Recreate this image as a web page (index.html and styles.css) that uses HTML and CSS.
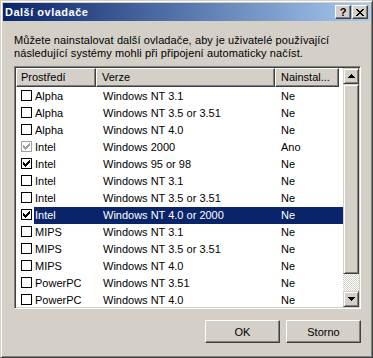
FILE: index.html
```html
<!DOCTYPE html>
<html lang="cs">
<head>
    <meta charset="UTF-8">
    <meta name="viewport" content="width=device-width, initial-scale=1.0">
    <title>Další ovladače</title>
    <link rel="stylesheet" href="styles.css">
</head>
<body>
    <div class="window">
        <div class="titlebar">
            <span class="title">Další ovladače</span>
            <div class="caption-buttons">
                <button class="cap-btn help">?</button>
                <button class="cap-btn close">
                    <svg width="8" height="7" viewBox="0 0 8 7" shape-rendering="crispEdges">
                        <path d="M0 0h2v1h-2zM6 0h2v1h-2zM1 1h2v1h-2zM5 1h2v1h-2zM2 2h4v1h-4zM3 3h2v1h-2zM2 4h4v1h-4zM1 5h2v1h-2zM5 5h2v1h-2zM0 6h2v1h-2zM6 6h2v1h-2z" fill="#000"/>
                    </svg>
                </button>
            </div>
        </div>

        <div class="content">
            <p class="intro">Můžete nainstalovat další ovladače, aby je uživatelé používající<br>následující systémy mohli při připojení automaticky načíst.</p>

            <div class="listview">
                <div class="list-main">
                    <div class="list-header">
                        <div class="head col-env">Prostředí</div>
                        <div class="head col-ver">Verze</div>
                        <div class="head col-inst">Nainstal...</div>
                    </div>
                    <div class="rows" id="rows"></div>
                </div>
                <div class="scrollbar">
                    <div class="scroll-btn">
                        <svg width="7" height="4" viewBox="0 0 7 4" shape-rendering="crispEdges"><path d="M3 0h1v1h1v1h1v1h1v1h-7v-1h1v-1h1v-1h1z" fill="#000"/></svg>
                    </div>
                    <div class="scroll-thumb"></div>
                    <div class="scroll-track"></div>
                    <div class="scroll-btn">
                        <svg width="7" height="4" viewBox="0 0 7 4" shape-rendering="crispEdges"><path d="M0 0h7v1h-1v1h-1v1h-1v1h-1v-1h-1v-1h-1v-1h-1z" fill="#000"/></svg>
                    </div>
                </div>
            </div>

            <div class="actions">
                <button class="push-btn">OK</button>
                <button class="push-btn">Storno</button>
            </div>
        </div>
    </div>

    <script>
        // state: 0 = empty, 1 = checked, 2 = checked but disabled (already installed)
        let drivers = [
            ['Alpha', 'Windows NT 3.1', 'Ne', 0],
            ['Alpha', 'Windows NT 3.5 or 3.51', 'Ne', 0],
            ['Alpha', 'Windows NT 4.0', 'Ne', 0],
            ['Intel', 'Windows 2000', 'Ano', 2],
            ['Intel', 'Windows 95 or 98', 'Ne', 1],
            ['Intel', 'Windows NT 3.1', 'Ne', 0],
            ['Intel', 'Windows NT 3.5 or 3.51', 'Ne', 0],
            ['Intel', 'Windows NT 4.0 or 2000', 'Ne', 1],
            ['MIPS', 'Windows NT 3.1', 'Ne', 0],
            ['MIPS', 'Windows NT 3.5 or 3.51', 'Ne', 0],
            ['MIPS', 'Windows NT 4.0', 'Ne', 0],
            ['PowerPC', 'Windows NT 3.51', 'Ne', 0],
            ['PowerPC', 'Windows NT 4.0', 'Ne', 0]
        ];
        let selected = 7;
        let checkSvg = '<svg width="7" height="7" viewBox="0 0 7 7" shape-rendering="crispEdges"><path d="M6 0h1v3h-1v1h-1v1h-1v1h-1v1h-1v-1h-1v-1h-1v-3h1v1h1v1h1v-1h1v-1h1z" fill="currentColor"/></svg>';

        let rows = document.getElementById('rows');
        drivers.forEach(function(d, i) {
            let row = document.createElement('div');
            row.className = 'row' + (i === selected ? ' selected' : '');
            let boxClass = 'check' + (d[3] === 2 ? ' disabled' : '');
            row.innerHTML =
                '<div class="check-cell"><span class="' + boxClass + '">' + (d[3] ? checkSvg : '') + '</span></div>' +
                '<div class="item">' +
                    '<span class="cell cell-env">' + d[0] + '</span>' +
                    '<span class="cell cell-ver">' + d[1] + '</span>' +
                    '<span class="cell cell-inst">' + d[2] + '</span>' +
                '</div>';
            rows.appendChild(row);
        });
    </script>
</body>
</html>
```

FILE: styles.css
```css
* {
    box-sizing: border-box;
}
body {
    margin: 0;
    font-family: "Liberation Sans", Arial, sans-serif;
    font-size: 11px;
    color: #000;
    background-color: #d4d0c8;
}
button {
    font-family: inherit;
    font-size: 11px;
    color: #000;
    margin: 0;
    padding: 0;
}
.window {
    width: 373px;
    height: 358px;
    padding: 2px;
    background-color: #d4d0c8;
    border: 1px solid;
    border-color: #d4d0c8 #404040 #404040 #d4d0c8;
    box-shadow: inset 1px 1px #fff, inset -1px -1px #808080;
}
.titlebar {
    height: 18px;
    display: flex;
    align-items: center;
    justify-content: space-between;
    padding-left: 2px;
    background: linear-gradient(to right, #0a246a, #a6caf0);
}
.title {
    color: #fff;
    font-weight: bold;
    letter-spacing: 0.5px;
}
.caption-buttons {
    display: flex;
    gap: 1px;
    margin-right: 2px;
}
.cap-btn {
    width: 16px;
    height: 14px;
    display: flex;
    align-items: center;
    justify-content: center;
    background-color: #d4d0c8;
    border: 1px solid;
    border-color: #fff #404040 #404040 #fff;
    box-shadow: inset -1px -1px #808080;
}
.cap-btn.help {
    font-weight: bold;
    font-size: 11px;
    line-height: 12px;
}
.content {
    padding: 13px 9px 0 11px;
}
.intro {
    margin: 0;
    line-height: 13px;
    height: 32px;
    letter-spacing: 0.1px;
}
.listview {
    height: 243px;
    display: flex;
    background-color: #fff;
    border: 1px solid;
    border-color: #808080 #fff #fff #808080;
    box-shadow: inset 1px 1px #404040, inset -1px -1px #d4d0c8;
    padding: 1px;
}
.list-main {
    flex: 1;
    overflow: hidden;
}
.list-header {
    display: flex;
    height: 19px;
}
.head {
    height: 19px;
    line-height: 16px;
    background-color: #d4d0c8;
    border: 1px solid;
    border-color: #fff #404040 #404040 #fff;
    box-shadow: inset -1px -1px #808080;
    padding-left: 5px;
    white-space: nowrap;
}
.col-env {
    width: 80px;
    padding-left: 4px;
}
.col-ver {
    width: 179px;
}
.col-inst {
    width: 64px;
}
.rows {
    padding-top: 1px;
}
.row {
    display: flex;
    height: 17px;
    line-height: 17px;
}
.check-cell {
    width: 18px;
    padding: 2px 0 0 5px;
}
.check {
    width: 11px;
    height: 11px;
    display: flex;
    align-items: center;
    justify-content: center;
    border: 1px solid #000;
    color: #000;
    background-color: #fff;
}
.check.disabled {
    border-color: #a0a0a0;
    color: #a0a0a0;
}
.item {
    display: flex;
    flex: 1;
    white-space: nowrap;
}
.row.selected .item {
    background-color: #0a246a;
    color: #fff;
}
.cell {
    overflow: hidden;
}
.cell-env {
    width: 62px;
    padding-left: 1px;
}
.cell-ver {
    width: 179px;
    padding-left: 7px;
}
.cell-inst {
    flex: 1;
    padding-left: 6px;
}
.scrollbar {
    width: 16px;
    display: flex;
    flex-direction: column;
}
.scroll-btn {
    height: 16px;
    display: flex;
    align-items: center;
    justify-content: center;
    background-color: #d4d0c8;
    border: 1px solid;
    border-color: #d4d0c8 #404040 #404040 #d4d0c8;
    box-shadow: inset 1px 1px #fff, inset -1px -1px #808080;
}
.scroll-thumb {
    height: 190px;
    background-color: #d4d0c8;
    border: 1px solid;
    border-color: #d4d0c8 #404040 #404040 #d4d0c8;
    box-shadow: inset 1px 1px #fff, inset -1px -1px #808080;
}
.scroll-track {
    flex: 1;
    background: repeating-conic-gradient(#d4d0c8 0 25%, #fff 0 50%) 0 0 / 2px 2px;
}
.actions {
    display: flex;
    justify-content: flex-end;
    gap: 6px;
    margin-top: 11px;
}
.push-btn {
    width: 75px;
    height: 23px;
    background-color: #d4d0c8;
    border: 1px solid;
    border-color: #fff #404040 #404040 #fff;
    box-shadow: inset -1px -1px #808080;
}
```
